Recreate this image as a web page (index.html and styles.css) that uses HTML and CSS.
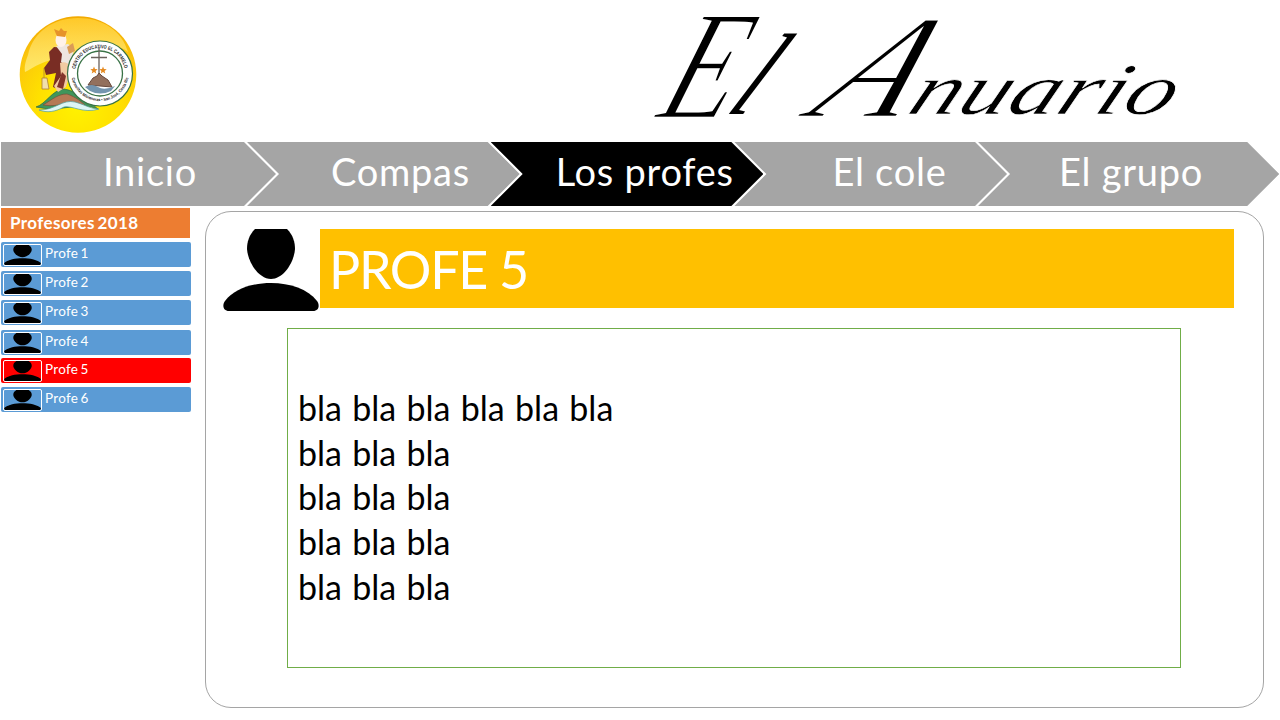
FILE: index.html
```html
<!DOCTYPE html>
<html lang="es">
<head>
<meta charset="utf-8">
<title>El Anuario</title>
<link rel="stylesheet" href="styles.css">
</head>
<body>
<svg class="defs" width="0" height="0">
  <symbol id="person" viewBox="0 0 96 82" preserveAspectRatio="none">
    <path d="M32 0H64C70 6 72 13 72 20C71 34 60 50 48 50C36 50 25 34 24 20C24 13 26 6 32 0Z"/>
    <path d="M6 82C0 82-1 76 2 72C11 60 29 54 48 54C67 54 85 60 94 72C97 76 96 82 90 82Z"/>
  </symbol>
</svg>
<header class="header">
  <svg class="logo" viewBox="10 8 136 132">
    <defs>
      <radialGradient id="sun" cx="50%" cy="78%" r="78%">
        <stop offset="0" stop-color="#fff200"/><stop offset=".45" stop-color="#ffe000"/><stop offset=".8" stop-color="#fbc60c"/><stop offset="1" stop-color="#f2a900"/>
      </radialGradient>
      <linearGradient id="shine" x1="0" y1="0" x2="0" y2="1"><stop offset="0" stop-color="#ffc928"/><stop offset="1" stop-color="#fff08a" stop-opacity=".75"/></linearGradient>
      <path id="arcTop" d="M75.200 70A25 25 0 0 1 124.800 70"/>
      <path id="arcLow" d="M71.500 77A28.900 28.900 0 0 0 128.500 77"/>
    </defs>
    <circle cx="78" cy="74.500" r="58.300" fill="url(#sun)"/>
    <path d="M28 55C33 32 53 18 78 18C103 18 122 31 128 52C111 37 93 62 68 59C47 57 35 67 25 72C24 66 26 60 28 55Z" fill="url(#shine)"/>
    <path d="M36 107C46 104 52 90 64 89C77 91 88 101 98 109C80 101 60 113 36 107Z" fill="#3f965b" stroke="#286746" stroke-width=".7"/>
    <path d="M43 105C53 99 58 94 67 94C76 97 82 102 87 107C70 99 60 108 43 105Z" fill="#b57955" stroke="#73513b" stroke-width=".7"/>
    <path d="M39 110C56 110 62 99 75 102C83 104 91 109 99 109C83 114 72 105 64 107C55 112 47 113 39 110Z" fill="#ddf5f4" stroke="#529e9a" stroke-width=".7"/>
    <path d="M54 47C63 47 67 54 66 63L65 75C69 81 65 88 60 90L53 87L56 73L46 75L44 68L50 60L49 52Z" fill="#792d24"/>
    <path d="M56 46L68 44L74 49L72 58L76 62L68 68L61 62L62 54Z" fill="#eee6e0"/>
    <path d="M60 63C67 60 74 67 70 74L66 87L58 92L54 86L61 76Z" fill="#f2cba2"/>
    <path d="M62 72L66 76L63 89L57 87Z" fill="#83352a"/>
    <ellipse cx="61" cy="40" rx="5.500" ry="7" fill="#fff2e9"/>
    <path d="M56 34L54 29L59 31L61 28L64 31L67 31L65 37L57 36Z" fill="#e6932a"/>
    <path d="M67 47L73 43L75 51L69 54Z" fill="#db9b56"/>
    <path d="M44 68L44 78M42 78H47L49 89H42Z" fill="#f1dfaa" stroke="#ad7d34" stroke-width=".8"/>
    <circle cx="100" cy="73.500" r="32.500" fill="#fff" stroke="#397246" stroke-width="1.200"/>
    <circle cx="100" cy="73.500" r="22.500" fill="#fff" stroke="#397246" stroke-width="1.300"/>
    <text class="seal-text"><textPath href="#arcTop" startOffset="1" textLength="69" lengthAdjust="spacingAndGlyphs">CENTRO EDUCATIVO EL CARMELO</textPath></text>
    <text class="seal-text seal-small"><textPath href="#arcLow" startOffset="1" textLength="81" lengthAdjust="spacingAndGlyphs">Carmelitas Misioneras • San José, Costa Rica</textPath></text>
    <path d="M99 47V80M91 57.500H107" stroke="#6a625c" stroke-width="1.300"/>
    <path d="M88 85L93 78L97 76L99 73L102 76L108 80L112 87Z" fill="#93705d" stroke="#68483b"/>
    <path d="M85 87Q92 83 98 87T115 86L111 91Q100 96 90 91Z" fill="#7495af"/>
    <path id="star" d="M94 66.500L95 69L97.700 69.200L95.600 70.900L96.300 73.500L94 72L91.700 73.500L92.400 70.900L90.300 69.200L93 69Z" fill="#e58b22"/>
    <use href="#star" x="9"/>
  </svg>
  <svg class="wordmark" viewBox="640 0 560 140" role="heading" aria-label="El Anuario">
    <text class="capital" transform="translate(654 118) skewX(-20)" font-size="156" textLength="72" lengthAdjust="spacingAndGlyphs">E</text>
    <text transform="translate(724 114) skewX(-32)" font-size="116" textLength="25" lengthAdjust="spacingAndGlyphs">l</text>
    <text class="capital" transform="translate(804 117) skewX(-36)" font-size="148" textLength="92" lengthAdjust="spacingAndGlyphs">A</text>
    <text class="small" transform="translate(905 114) skewX(-24)" font-size="73" textLength="263" lengthAdjust="spacingAndGlyphs">nuario</text>
  </svg>
</header>
<nav class="nav">
  <a class="step first">Inicio</a>
  <a class="step compas">Compas</a>
  <a class="step active">Los profes</a>
  <a class="step cole">El cole</a>
  <a class="step grupo">El grupo</a>
</nav>
<div class="body">
  <aside class="sidebar">
    <h2 class="side-title">Profesores 2018</h2>
    <a class="profe"><svg class="thumb"><use href="#person"/></svg><span>Profe 1</span></a>
    <a class="profe"><svg class="thumb"><use href="#person"/></svg><span>Profe 2</span></a>
    <a class="profe"><svg class="thumb"><use href="#person"/></svg><span>Profe 3</span></a>
    <a class="profe lower"><svg class="thumb"><use href="#person"/></svg><span>Profe 4</span></a>
    <a class="profe selected"><svg class="thumb"><use href="#person"/></svg><span>Profe 5</span></a>
    <a class="profe"><svg class="thumb"><use href="#person"/></svg><span>Profe 6</span></a>
  </aside>
  <main class="panel">
    <div class="profile">
      <svg class="avatar"><use href="#person"/></svg>
      <h1 class="name">PROFE 5</h1>
    </div>
    <section class="text">
      <p>bla bla bla bla bla bla</p>
      <p>bla bla bla</p>
      <p>bla bla bla</p>
      <p>bla bla bla</p>
      <p>bla bla bla</p>
    </section>
  </main>
</div>
</body>
</html>
```

FILE: styles.css
```css
* { box-sizing: border-box; }
body { margin: 0; width: 1280px; height: 720px; overflow: hidden; background: #fff; font-family: Lato, sans-serif; }
h1, h2, p { margin: 0; font-weight: 400; }
.defs { display: block; }
.header { display: flex; justify-content: space-between; height: 142px; padding: 8px 80px 0 10px; }
.logo { width: 136px; height: 132px; }
.seal-text { font: 700 5px "Liberation Sans", sans-serif; fill: #222; }
.seal-small { font-size: 4.2px; }
.wordmark { width: 560px; height: 140px; margin-top: -8px; overflow: visible; font-family: "Liberation Serif", serif; font-style: italic; }
.capital { stroke: #fff; stroke-width: 2.5px; }
.small { stroke: #fff; stroke-width: .6px; }
.nav { display: flex; height: 64px; padding-left: 1px; }
.step {
  flex: none; width: 272.7px; margin-left: -29px; padding-left: 84px;
  font-size: 38px; letter-spacing: .75px; line-height: 59px; color: #fff; white-space: nowrap; background: #a5a5a5;
  clip-path: polygon(0 0, calc(100% - 32px) 0, 100% 50%, calc(100% - 32px) 100%, 0 100%, 32px 50%);
}
.step.first { width: 275px; margin-left: 0; padding-left: 102px; clip-path: polygon(0 0, calc(100% - 32px) 0, 100% 50%, calc(100% - 32px) 100%, 0 100%); }
.step.active { background: #000; padding-left: 65px; }
.step.cole { padding-left: 98px; }
.step.grupo { width: 301.2px; padding-left: 81px; }
.body { display: flex; align-items: flex-start; padding: 2px 0 0 1px; }
.sidebar { width: 190px; display: flex; flex-direction: column; gap: 4px; }
.side-title { width: 189px; height: 30px; padding-left: 9px; background: #ed7d31; color: #fff; font-size: 17px; font-weight: 700; letter-spacing: .4px; word-spacing: -2px; line-height: 29px; white-space: nowrap; }
.profe { display: flex; gap: 3px; height: 25px; padding: 2px; border-radius: 2px; background: #5b9bd5; color: #fff; font-size: 13.5px; letter-spacing: .3px; word-spacing: -1.5px; line-height: 19px; }
.lower { margin: 1px 0 -1px; }
.selected { background: #f00; }
.thumb { width: 39px; height: 22px; border: 1px solid #fff; border-radius: 2px; }
.panel { width: 1059px; height: 497px; margin: 3px 0 0 14px; padding: 17px 29px 0 17px; border: 1px solid #a5a5a5; border-radius: 26px; }
.profile { display: flex; align-items: flex-start; gap: 1px; }
.avatar { flex: none; width: 96px; height: 82px; }
.name { flex: 1; height: 79px; padding-left: 9px; background: #ffc000; color: #fff; font-size: 52px; letter-spacing: -1.3px; line-height: 80px; }
.text { width: 894px; height: 340px; margin: 17px 0 0 64px; padding: 57px 0 0 10px; border: 1px solid #70ad47; color: #000; font-size: 34px; word-spacing: 1.6px; line-height: 44.700px; }
```
